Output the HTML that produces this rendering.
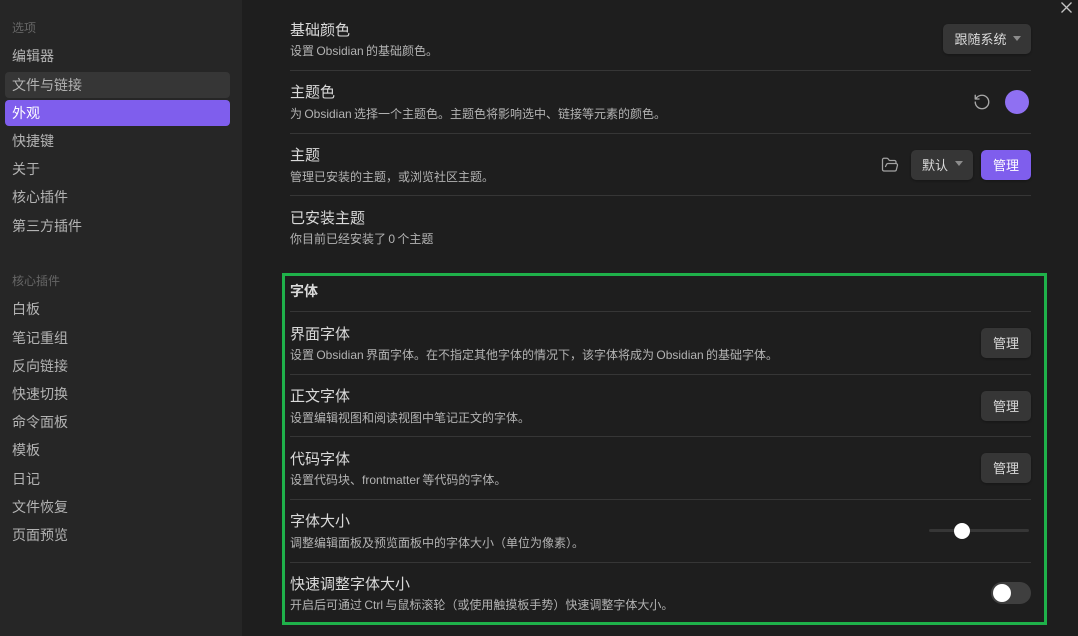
<!DOCTYPE html>
<html lang="zh">
<head>
<meta charset="utf-8">
<title>外观</title>
<style>
html,body{margin:0;padding:0;width:1078px;height:636px;overflow:hidden;background:#1e1e1e}
body{position:relative;font-family:"Liberation Sans","Noto Sans CJK SC",sans-serif;color:#dadada}
div,span,svg{position:absolute;white-space:nowrap}
#side{left:0;top:0;width:242px;height:636px;background:#262626}
.n{left:12px;font-size:14px;line-height:20px;height:20px;color:#b3b3b3}
.h{left:12px;font-size:12px;line-height:18px;color:#666}
.bg{left:5px;width:225px;height:26px;border-radius:4px}
.t{left:290px;font-size:15px;line-height:20px;color:#dadada;margin-top:1px}
.d{left:290px;font-size:12px;line-height:16px;color:#b3b3b3;word-spacing:-1px}
.l{left:290px;width:741px;height:1px;background:#363636}
.b{height:30px;border-radius:5px;background:#363636;color:#dadada;font-size:13px;line-height:32px;text-align:center;box-shadow:0 1px 2px rgba(0,0,0,.3)}
.a{background:#7f5eed;color:#fff}
.c{width:0;height:0;border-left:4px solid transparent;border-right:4px solid transparent;border-top:5px solid #8c8c8c}
</style>
</head>
<body>
<div id="side"></div>
<div class="h" style="top:19px">选项</div>
<div class="n" style="top:46px">编辑器</div>
<div class="bg" style="top:72px;background:#363636"></div>
<div class="n" style="top:75px">文件与链接</div>
<div class="bg" style="top:100px;background:#7f5eed"></div>
<div class="n" style="top:103px;color:#fff">外观</div>
<div class="n" style="top:131px">快捷键</div>
<div class="n" style="top:159px">关于</div>
<div class="n" style="top:187px">核心插件</div>
<div class="n" style="top:216px">第三方插件</div>
<div class="h" style="top:272px">核心插件</div>
<div class="n" style="top:299px">白板</div>
<div class="n" style="top:328px">笔记重组</div>
<div class="n" style="top:356px">反向链接</div>
<div class="n" style="top:384px">快速切换</div>
<div class="n" style="top:412px">命令面板</div>
<div class="n" style="top:440px">模板</div>
<div class="n" style="top:469px">日记</div>
<div class="n" style="top:497px">文件恢复</div>
<div class="n" style="top:525px">页面预览</div>

<svg style="left:1060px;top:1px" width="13" height="12" viewBox="0 0 13 12"><path d="M1.5 1.5L11.5 11.5M11.5 1.5L1.5 11.5" stroke="#c4c4c4" stroke-width="1.3" fill="none"/></svg>

<div class="t" style="top:20px">基础颜色</div>
<div class="d" style="top:43px">设置 Obsidian 的基础颜色。</div>
<div class="b" style="left:943px;top:24px;width:88px;text-indent:-13px">跟随系统</div>
<div class="c" style="left:1013px;top:36px"></div>
<div class="l" style="top:70px"></div>

<div class="t" style="top:82px">主题色</div>
<div class="d" style="top:106px">为 Obsidian 选择一个主题色。主题色将影响选中、链接等元素的颜色。</div>
<svg style="left:973px;top:93px" width="18" height="18" viewBox="0 0 24 24"><path d="M3 12a9 9 0 1 0 9-9 9.75 9.75 0 0 0-6.74 2.74L3 8M3 3v5h5" stroke="#a8a8a8" stroke-width="1.8" fill="none" stroke-linecap="round" stroke-linejoin="round"/></svg>
<div style="left:1005px;top:90px;width:24px;height:24px;border-radius:50%;background:#8f70f2"></div>
<div class="l" style="top:133px"></div>

<div class="t" style="top:145px">主题</div>
<div class="d" style="top:169px">管理已安装的主题，或浏览社区主题。</div>
<svg style="left:881px;top:156px" width="18" height="18" viewBox="0 0 24 24"><path d="m6 14 1.5-2.9A2 2 0 0 1 9.24 10H20a2 2 0 0 1 1.94 2.5l-1.54 6a2 2 0 0 1-1.95 1.5H4a2 2 0 0 1-2-2V5a2 2 0 0 1 2-2h3.9a2 2 0 0 1 1.69.9l.81 1.2a2 2 0 0 0 1.69.9H18a2 2 0 0 1 2 2v2" stroke="#a3a3a3" stroke-width="1.7" fill="none" stroke-linejoin="round" stroke-linecap="round"/></svg>
<div class="b" style="left:911px;top:150px;width:62px;text-indent:-14px">默认</div>
<div class="c" style="left:955px;top:161px"></div>
<div class="b a" style="left:981px;top:150px;width:50px">管理</div>
<div class="l" style="top:195px"></div>

<div class="t" style="top:208px">已安装主题</div>
<div class="d" style="top:231px">你目前已经安装了 0 个主题</div>

<div style="left:282px;top:273px;width:759px;height:346px;border:3px solid #1fb14a"></div>

<div style="left:290px;top:281px;font-size:14px;line-height:20px;font-weight:bold;color:#dadada">字体</div>
<div class="l" style="top:311px"></div>

<div class="t" style="top:324px">界面字体</div>
<div class="d" style="top:347px">设置 Obsidian 界面字体。在不指定其他字体的情况下，该字体将成为 Obsidian 的基础字体。</div>
<div class="b" style="left:981px;top:328px;width:50px">管理</div>
<div class="l" style="top:374px"></div>

<div class="t" style="top:386px">正文字体</div>
<div class="d" style="top:410px">设置编辑视图和阅读视图中笔记正文的字体。</div>
<div class="b" style="left:981px;top:391px;width:50px">管理</div>
<div class="l" style="top:436px"></div>

<div class="t" style="top:449px">代码字体</div>
<div class="d" style="top:472px">设置代码块、frontmatter 等代码的字体。</div>
<div class="b" style="left:981px;top:453px;width:50px">管理</div>
<div class="l" style="top:499px"></div>

<div class="t" style="top:511px">字体大小</div>
<div class="d" style="top:535px">调整编辑面板及预览面板中的字体大小（单位为像素）。</div>
<div style="left:929px;top:529px;width:100px;height:3px;border-radius:2px;background:#363636"></div>
<div style="left:954px;top:523px;width:16px;height:16px;border-radius:50%;background:#fff"></div>
<div class="l" style="top:562px"></div>

<div class="t" style="top:574px">快速调整字体大小</div>
<div class="d" style="top:597px">开启后可通过 Ctrl 与鼠标滚轮（或使用触摸板手势）快速调整字体大小。</div>
<div style="left:991px;top:582px;width:40px;height:22px;border-radius:11px;background:#3f3f3f"></div>
<div style="left:993px;top:584px;width:18px;height:18px;border-radius:50%;background:#fff"></div>
</body>
</html>
